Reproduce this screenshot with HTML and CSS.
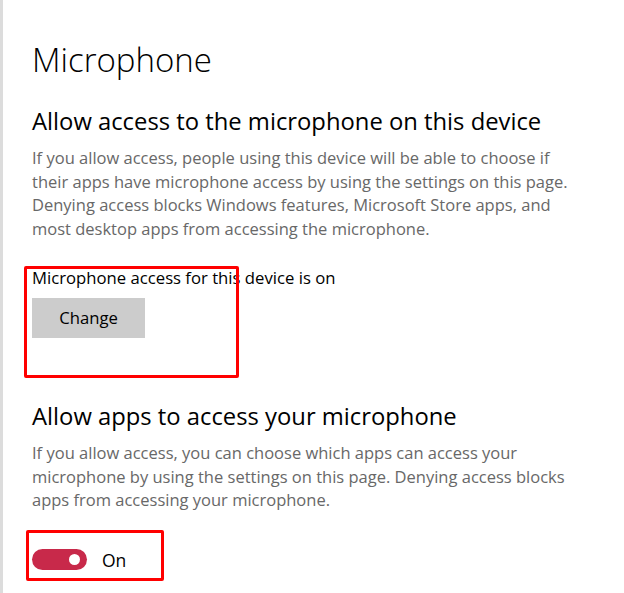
FILE: index.html
```html
<!DOCTYPE html>
<html lang="en">
<head>
<meta charset="utf-8">
<title>Microphone</title>
<link rel="stylesheet" href="styles.css">
</head>
<body>
<div class="page">
  <h1 class="title">Microphone</h1>

  <section class="section">
    <h2 class="heading">Allow access to the microphone on this device</h2>
    <p class="desc">If you allow access, people using this device will be able to choose if<br>their apps have microphone access by using the settings on this page.<br>Denying access blocks Windows features, Microsoft Store apps, and<br>most desktop apps from accessing the microphone.</p>
    <div class="device-block">
      <div class="status">Microphone access for this device is on</div>
      <button class="btn">Change</button>
      <span class="mark mark-device"></span>
    </div>
  </section>

  <section class="section">
    <h2 class="heading">Allow apps to access your microphone</h2>
    <p class="desc">If you allow access, you can choose which apps can access your<br>microphone by using the settings on this page. Denying access blocks<br>apps from accessing your microphone.</p>
    <div class="toggle-row">
      <span class="toggle"><span class="knob"></span></span>
      <span class="toggle-label">On</span>
      <span class="mark mark-toggle"></span>
    </div>
  </section>
</div>
</body>
</html>
```

FILE: styles.css
```css
* { box-sizing: border-box; }
html, body { margin: 0; padding: 0; background: #fff; }
body {
  font-family: "Open Sans", "Noto Sans", sans-serif;
  color: #000;
}
.page {
  min-height: 593px;
  border-left: 3px solid #dcdcdc;
  padding: 38px 0 0 29px;
}
.title {
  margin: 0;
  font-size: 33px;
  font-weight: 300;
  line-height: 44px;
}
.heading {
  margin: 24px 0 0;
  font-size: 23.8px;
  font-weight: 400;
  line-height: 30px;
}
.desc {
  margin: 10px 0 0;
  font-size: 16.5px;
  line-height: 23.7px;
  color: #686868;
  white-space: nowrap;
}
.device-block {
  position: relative;
  margin: 26px 0 63px;
}
.status {
  font-size: 16.7px;
  line-height: 22px;
}
.btn {
  display: block;
  margin-top: 9px;
  width: 113px;
  height: 40px;
  border: 0;
  background: #cccccc;
  font-family: inherit;
  font-size: 16.7px;
  color: #000;
  padding: 0;
}
.mark {
  position: absolute;
  border: 3px solid #ff0000;
  border-radius: 2px;
}
.mark-device { left: -8px; top: -1px; width: 215px; height: 112px; }
.toggle-row {
  position: relative;
  display: flex;
  align-items: center;
  margin-top: 37px;
  height: 21px;
}
.toggle {
  display: flex;
  align-items: center;
  justify-content: flex-end;
  width: 55px;
  height: 21px;
  border-radius: 10.5px;
  background: #c8294a;
  padding-right: 7px;
}
.knob {
  width: 11px;
  height: 11px;
  border-radius: 50%;
  background: #fff;
}
.toggle-label {
  margin-left: 15px;
  margin-top: 2px;
  font-size: 17.5px;
}
.mark-toggle { left: -6px; top: -19px; width: 138px; height: 51px; }
```
